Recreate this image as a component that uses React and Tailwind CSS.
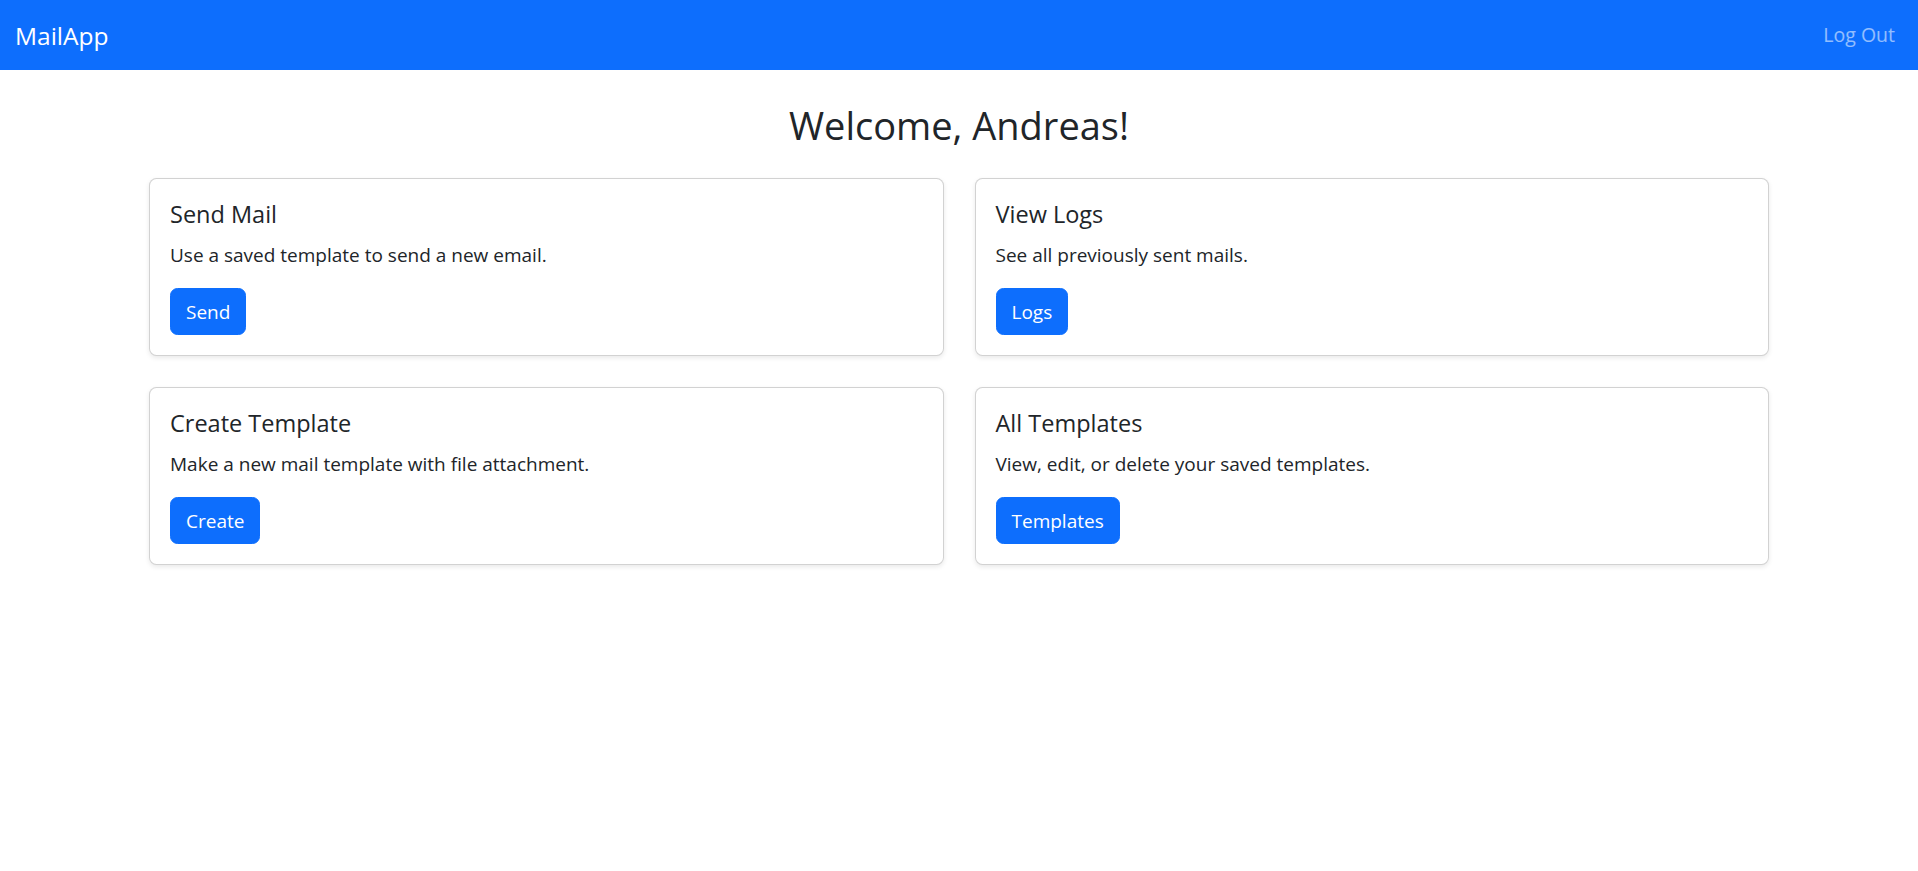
import React from 'react'

const font = { fontFamily: '"Segoe UI", "Open Sans", "Noto Sans", sans-serif' }

const cards = [
  { title: 'Send Mail', text: 'Use a saved template to send a new email.', btn: 'Send' },
  { title: 'View Logs', text: 'See all previously sent mails.', btn: 'Logs' },
  { title: 'Create Template', text: 'Make a new mail template with file attachment.', btn: 'Create' },
  { title: 'All Templates', text: 'View, edit, or delete your saved templates.', btn: 'Templates' },
]

function Card({ title, text, btn }) {
  return (
    <div className="bg-white border border-black/[0.175] rounded-[7.5px] shadow-[0_2px_5px_rgba(0,0,0,0.09)] p-5">
      <h5 className="text-[23.5px] leading-[30px] font-normal text-[#212529] mb-[11px]">{title}</h5>
      <p className="text-[19px] leading-[30px] text-[#212529] mb-[18px]">{text}</p>
      <button className="bg-[#0d6efd] text-white text-[19px] leading-[30px] px-[15px] py-[7.5px] border border-[#0d6efd] rounded-[7.5px]">
        {btn}
      </button>
    </div>
  )
}

export default function App() {
  return (
    <div className="min-h-screen bg-white" style={font}>
      {/* Navbar */}
      <nav className="h-[70px] bg-[#0d6efd] flex items-center justify-between pl-[15px] pr-[23px]">
        <a className="text-white text-[24.5px] leading-[37px]">MailApp</a>
        <a className="text-white/55 text-[19.5px] leading-[30px]">Log Out</a>
      </nav>

      {/* Content */}
      <div className="w-[1650px] mx-auto px-[15px] mt-[31px]">
        <h2 className="text-center text-[38px] leading-[48px] text-[#212529] font-normal mb-[29px]">
          Welcome, Andreas!
        </h2>
        <div className="grid grid-cols-2 gap-x-[31px] gap-y-[31px]">
          {cards.map(c => <Card key={c.title} {...c} />)}
        </div>
      </div>
    </div>
  )
}
